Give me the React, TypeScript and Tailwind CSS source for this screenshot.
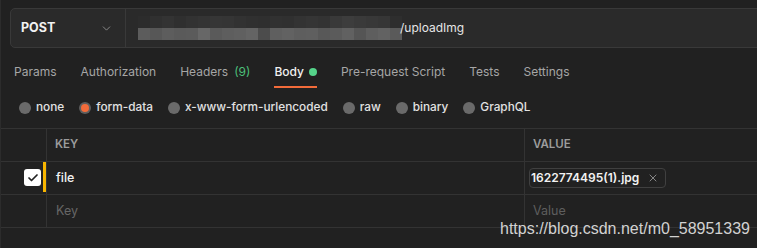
import { ChevronDown, Check, X } from 'lucide-react';

const App = () => {
  const tabs = [
    { label: "Params" },
    { label: "Authorization" },
    { label: "Headers", count: "(9)" },
    { label: "Body", active: true },
    { label: "Pre-request Script" },
    { label: "Tests" },
    { label: "Settings" }
  ];

  const bodyTypes = [
    { label: "none" },
    { label: "form-data", selected: true },
    { label: "x-www-form-urlencoded" },
    { label: "raw" },
    { label: "binary" },
    { label: "GraphQL" }
  ];

  // mosaic that hides the host part of the url
  const mosaicTop = [
    "bg-[#2c2c2c]", "bg-[#303030]", "bg-[#333333]", "bg-[#2f2f2f]", "bg-[#323232]", "bg-[#343434]",
    "bg-[#363636]", "bg-[#353535]", "bg-[#323232]", "bg-[#303030]", "bg-[#2f2f2f]", "bg-[#313131]",
    "bg-[#303030]", "bg-[#333333]", "bg-[#353535]", "bg-[#333333]", "bg-[#393939]", "bg-[#3d3d3d]",
    "bg-[#3a3a3a]", "bg-[#383838]", "bg-[#363636]", "bg-[#2e2e2e]"
  ];
  const mosaicBottom = [
    "bg-[#5c5c5c]", "bg-[#575757]", "bg-[#5d5d5d]", "bg-[#5a5a5a]", "bg-[#5b5b5b]", "bg-[#676767]",
    "bg-[#5a5a5a]", "bg-[#5e5e5e]", "bg-[#606060]", "bg-[#646464]", "bg-[#4c4c4c]", "bg-[#5f5f5f]",
    "bg-[#626262]", "bg-[#5e5e5e]", "bg-[#5f5f5f]", "bg-[#585858]", "bg-[#5b5b5b]", "bg-[#616161]",
    "bg-[#555555]", "bg-[#5e5e5e]", "bg-[#626262]", "bg-[#5a5a5a]"
  ];

  return (
    <div className="relative w-[757px] h-[248px] overflow-hidden bg-[#212121] border-l border-[#2c2c2c] font-['Inter',sans-serif]">
      {/* URL bar */}
      <div className="pt-[8px] pl-[9px]">
        <div className="flex h-[40px] w-[760px] border border-[#393939] rounded-l-[5px] bg-[#2a2a2a]">
          <div className="flex w-[115px] items-center justify-between border-r border-[#393939] pl-[10px] pr-[12px]">
            <span className="text-[12.5px] font-bold text-[#f2f2f2]">POST</span>
            <ChevronDown size={13} strokeWidth={1.5} className="text-[#9a9a9a]" />
          </div>
          <div className="flex items-center pl-[12px]">
            <div className="flex flex-col">
              <div className="flex h-[12px]">
                {mosaicTop.map((c, i) => (
                  <div key={i} className={`w-[12px] ${c}`} />
                ))}
              </div>
              <div className="flex h-[12px]">
                {mosaicBottom.map((c, i) => (
                  <div key={i} className={`w-[12px] ${c}`} />
                ))}
              </div>
            </div>
            <span className="-mt-[1px] -ml-[2px] text-[12px] text-[#e6e6e6]">/uploadImg</span>
          </div>
        </div>
      </div>

      {/* Tabs */}
      <div className="mt-[14px] flex gap-[24px] pl-[13px]">
        {tabs.map((tab, index) => (
          <div key={index} className="flex flex-col">
            <div className={`flex items-center leading-[20px] text-[12px] ${tab.active ? "text-[#f0f0f0] font-medium" : "text-[#a6a6a6]"}`}>
              <span>{tab.label}</span>
              {tab.count && <span className="ml-[6px] text-[#4cbf7a]">{tab.count}</span>}
              {tab.active && <span className="ml-[5px] h-[8px] w-[8px] rounded-full bg-[#55d38a]" />}
            </div>
            <div className={`mt-[4px] h-[2px] ${tab.active ? "bg-[#f26b3a]" : ""}`} />
          </div>
        ))}
      </div>

      {/* Body types */}
      <div className="mt-[10px] flex h-[20px] items-center gap-[15px] pl-[18px]">
        {bodyTypes.map((t, index) => (
          <div key={index} className="flex items-center gap-[5px]">
            {t.selected ? (
              <span className="flex h-[12px] w-[12px] items-center justify-center rounded-full bg-[#5e5e5e]">
                <span className="h-[8px] w-[8px] rounded-full bg-[#f26b3a]" />
              </span>
            ) : (
              <span className="h-[12px] w-[12px] rounded-full bg-[#6a6a6a]" />
            )}
            <span className="text-[11.8px] font-medium text-[#e2e2e2]">{t.label}</span>
          </div>
        ))}
      </div>

      {/* Params table */}
      <div className="mt-[10px] border-t border-[#333333]">
        <div className="flex h-[33px] border-b border-[#333333]">
          <div className="w-[46px] border-r border-[#333333]" />
          <div className="flex w-[478px] items-center border-r border-[#333333] pl-[8px] text-[11.5px] font-semibold text-[#9c9c9c]">
            KEY
          </div>
          <div className="flex flex-1 items-center pl-[8px] text-[11.5px] font-semibold text-[#9c9c9c]">
            VALUE
          </div>
        </div>

        <div className="flex h-[33px] border-b border-[#333333]">
          <div className="flex w-[46px] items-start justify-end border-r border-[#333333]">
            <span className="mt-[7px] flex h-[17px] w-[17px] items-center justify-center rounded-[3px] bg-white">
              <Check size={12} strokeWidth={3.5} className="text-[#222222]" />
            </span>
            <span className="ml-[2px] h-[30px] w-[3px] bg-[#f7b500]" />
          </div>
          <div className="flex w-[478px] items-center border-r border-[#333333] pl-[9px] text-[12.5px] font-medium text-[#f2f2f2]">
            file
          </div>
          <div className="flex flex-1 items-center pl-[4px]">
            <div className="flex h-[20px] items-center gap-[8px] rounded-[4px] border border-[#404040] pl-[1px] pr-[6px]">
              <span className="text-[12px] font-semibold text-[#f2f2f2]">1622774495(1).jpg</span>
              <X size={12} strokeWidth={1.5} className="text-[#a8a8a8]" />
            </div>
          </div>
        </div>

        <div className="flex h-[33px] border-b border-[#333333]">
          <div className="w-[46px] border-r border-[#333333]" />
          <div className="flex w-[478px] items-center border-r border-[#333333] pl-[9px] text-[12.5px] text-[#666666]">
            Key
          </div>
          <div className="flex flex-1 items-center pl-[8px] text-[12.5px] text-[#5e5e5e]">
            Value
          </div>
        </div>
      </div>

      {/* watermark */}
      <div className="absolute left-[499px] top-[219px] font-['Liberation_Sans',Arial,sans-serif] text-[16px] leading-[20px] text-[#d2d2d2]">
        https://blog.csdn.net/m0_58951339
      </div>
    </div>
  );
};

export default App;
